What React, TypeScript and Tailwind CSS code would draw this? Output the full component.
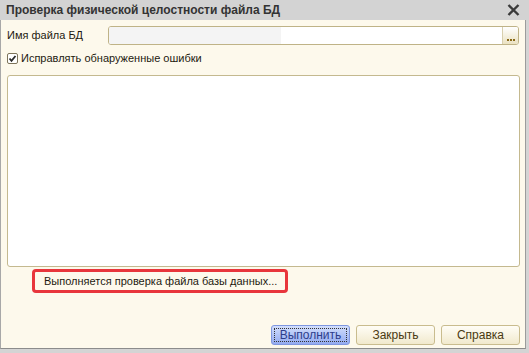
import React from "react";

export default function App() {
  const font = { fontFamily: '"Liberation Sans", Arial, sans-serif' };
  return (
    <div
      className="w-[529px] h-[353px] flex flex-col bg-[#d4d4d4] overflow-hidden"
      style={font}
    >
      {/* Title bar */}
      <div className="h-[20px] flex items-center justify-between pl-[6px] pr-[9px] bg-[#d3d3d3]">
        <span className="text-[12px] font-bold text-[#333333] leading-none whitespace-nowrap">
          Проверка физической целостности файла БД
        </span>
        <svg width="13" height="12" viewBox="0 0 13 12">
          <path d="M1.5 1 L11.5 11 M11.5 1 L1.5 11" stroke="#3a3a3a" strokeWidth="2.4" />
        </svg>
      </div>
      {/* Body */}
      <div className="flex-1 flex flex-col bg-[#fdf9ec] border-l border-[#a8a8a8] border-r border-b mr-[3px] mb-[4px] border-r-[#9c9c9c] border-b-[#8c8c8c] relative">
        {/* Row 1 */}
        <div className="flex items-center mt-[6px] h-[19px]">
          <span className="w-[106px] pl-[6px] text-[11px] text-[#1e1a10] whitespace-nowrap">Имя файла БД</span>
          <div className="flex ml-[1px] w-[411px] h-[19px] border border-[#bfb387] rounded-[3px] overflow-hidden bg-white">
            <div className="w-[172px] bg-[#f4f4f4]" />
            <div className="flex-1 bg-white" />
            <div className="w-[16px] border-l border-[#d8cfae] bg-gradient-to-b from-[#ffffff] to-[#ebe2c2] flex items-end justify-center pb-[3px]">
              <div className="flex gap-[1px]">
                <div className="w-[2px] h-[2px] bg-[#8a6a1a]" />
                <div className="w-[2px] h-[2px] bg-[#8a6a1a]" />
                <div className="w-[2px] h-[2px] bg-[#8a6a1a]" />
              </div>
            </div>
          </div>
        </div>
        {/* Row 2 checkbox */}
        <div className="flex items-center mt-[7px] pl-[6px] h-[12px]">
          <div className="w-[11px] h-[11px] border border-[#7d745a] rounded-[2px] bg-white flex items-center justify-center">
            <svg width="9" height="9" viewBox="0 0 9 9">
              <path d="M1.5 4.5 L3.5 6.8 L7.5 2" stroke="#2a2a2a" strokeWidth="1.8" fill="none" />
            </svg>
          </div>
          <span className="ml-[3px] text-[11px] text-[#1e1a10] whitespace-nowrap">Исправлять обнаруженные ошибки</span>
        </div>
        {/* Text area */}
        <div className="ml-[6px] mt-[11px] w-[513px] h-[192px] bg-white border border-[#c4b98f] rounded-[3px]" />
        {/* Status */}
        <div className="ml-[31px] mt-[2px] w-[256px] h-[24px] border-[3px] border-[#e8363c] rounded-[4px] flex items-center pl-[9px]">
          <span className="text-[11px] text-[#1e1a10] whitespace-nowrap">Выполняется проверка файла базы данных...</span>
        </div>
        {/* Buttons */}
        <div className="flex justify-end gap-[6px] mt-[32px] pr-[5px]">
          <div className="w-[79px] h-[20px] rounded-[3px] border border-[#7f97e0] bg-gradient-to-b from-[#d2defc] to-[#93aaf0] p-[2px]">
            <div className="w-full h-full border border-dotted border-[#333] flex items-center justify-center">
              <span className="text-[12px] text-[#2d3d8c] leading-none">Выполнить</span>
            </div>
          </div>
          <div className="w-[79px] h-[20px] rounded-[3px] border border-[#c9bc8e] bg-gradient-to-b from-[#fffdf6] to-[#f1e9cd] flex items-center justify-center">
            <span className="text-[12px] text-[#4a3a12] leading-none">Закрыть</span>
          </div>
          <div className="w-[79px] h-[20px] rounded-[3px] border border-[#c9bc8e] bg-gradient-to-b from-[#fffdf6] to-[#f1e9cd] flex items-center justify-center">
            <span className="text-[12px] text-[#4a3a12] leading-none">Справка</span>
          </div>
        </div>
      </div>
    </div>
  );
}
